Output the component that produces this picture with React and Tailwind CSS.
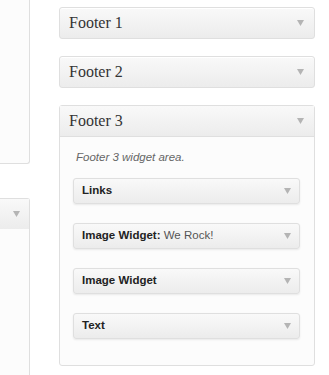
import React from 'react';

const Arrow = () => (
  <svg width="7" height="6" viewBox="0 0 7 6" className="shrink-0">
    <path d="M0 0 L7 0 L3.5 6 Z" fill="#b4b4b4" />
  </svg>
);

const SidebarHeader = ({ title }) => (
  <div className="flex h-[32px] items-center justify-between rounded-[3px] border border-[#dfdfdf] bg-gradient-to-b from-[#f9f9f9] to-[#ececec] pl-[9px] pr-[10px] shadow-[0_1px_0_#fff_inset]">
    <span className="text-[16px] text-[#333]" style={{ fontFamily: '"Liberation Serif", serif' }}>{title}</span>
    <Arrow />
  </div>
);

const Widget = ({ name, title }) => (
  <div className="flex h-[26px] items-center justify-between rounded-[3px] border border-[#dfdfdf] bg-gradient-to-b from-[#f9f9f9] to-[#ececec] pl-[8px] pr-[8px] shadow-[0_1px_2px_rgba(0,0,0,0.08)]">
    <span className="text-[11.5px] font-bold text-[#222]">
      {name}
      {title && <span className="font-normal text-[#555]"> {title}</span>}
    </span>
    <Arrow />
  </div>
);

export default function App() {
  return (
    <div className="flex h-[375px] w-[329px] overflow-hidden bg-white" style={{ fontFamily: '"Liberation Sans", Arial, sans-serif' }}>
      {/* Columna izquierda, cortada */}
      <div className="flex w-[30px] shrink-0 flex-col">
        <div className="h-[164px] rounded-br-[3px] border-b border-r border-[#dfdfdf] bg-[#fcfcfc]" />
        <div className="mt-[34px] flex-1 rounded-tr-[3px] border-r border-t border-[#dfdfdf] bg-[#fcfcfc]">
          <div className="flex h-[30px] items-center justify-end bg-gradient-to-b from-[#f9f9f9] to-[#ececec] pr-[9px]">
            <Arrow />
          </div>
        </div>
      </div>

      {/* Columna derecha */}
      <div className="ml-[29px] flex w-[256px] shrink-0 flex-col gap-[17px] pt-[7px]">
        <SidebarHeader title="Footer 1" />
        <SidebarHeader title="Footer 2" />
        <div className="rounded-[3px] border border-[#dfdfdf] bg-[#fcfcfc]">
          <div className="flex h-[31px] items-center justify-between border-b border-[#dfdfdf] bg-gradient-to-b from-[#f9f9f9] to-[#ececec] pl-[9px] pr-[10px]">
            <span className="text-[16px] text-[#333]" style={{ fontFamily: '"Liberation Serif", serif' }}>Footer 3</span>
            <Arrow />
          </div>
          <div className="flex flex-col pb-[26px] pl-[13px] pr-[14px] pt-[13px]">
            <p className="mb-[14px] pl-[3px] text-[11.5px] italic leading-[14px] text-[#666]">Footer 3 widget area.</p>
            <div className="flex flex-col gap-[19px]">
              <Widget name="Links" />
              <Widget name="Image Widget:" title="We Rock!" />
              <Widget name="Image Widget" />
              <Widget name="Text" />
            </div>
          </div>
        </div>
      </div>
    </div>
  );
}
